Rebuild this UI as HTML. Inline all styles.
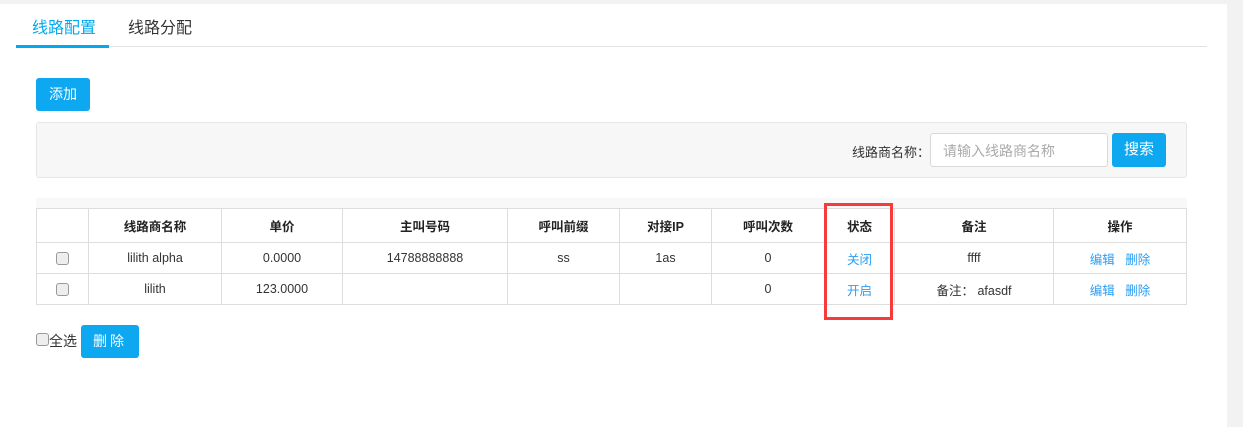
<!DOCTYPE html>
<html><head><meta charset="utf-8"><style>
*{box-sizing:border-box;margin:0;padding:0}
body{width:1243px;height:427px;background:#fff;font-family:"Liberation Sans","Noto Sans CJK SC",sans-serif;font-size:13px;color:#333;position:relative;overflow:hidden}
.topbar{position:absolute;left:0;top:0;width:1243px;height:4px;background:#f2f2f2}
.rightbar{position:absolute;left:1227px;top:0;width:16px;height:427px;background:#f2f2f2}
.tab{position:absolute;top:14px;font-size:16px}
.line{position:absolute;left:16px;top:46px;width:1191px;height:1px;background:#e2e2e2}
.uline{position:absolute;left:16px;top:45px;width:93px;height:3px;background:#00a9f0}
.btn{position:absolute;background:#0ea8f0;color:#fff;border-radius:3px;text-align:center;font-size:14px}
.sbox{position:absolute;left:36px;top:122px;width:1151px;height:56px;background:#f7f7f7;border:1px solid #e6e6e6;border-radius:3px}
.inp{position:absolute;left:930px;top:133px;width:178px;height:34px;border:1px solid #d8d8d8;border-radius:3px;background:#fff;color:#aaa;padding:7px 12px;font-size:14px}
.strip{position:absolute;left:36px;top:198px;width:1151px;height:10px;background:#f8f8f8}
table{position:absolute;left:36px;top:208px;border-collapse:collapse;width:1151px}
td,th{border:1px solid #ddd;text-align:center;font-size:12.5px;height:31px}
th{height:34px;font-weight:bold;color:#222}
.cb{display:inline-block;width:13px;height:13px;border:1px solid #999;border-radius:3px;background:#eee;vertical-align:middle}
.bl{color:#2a9df4}
.red{position:absolute;left:824px;top:203px;width:69px;height:117px;border:3px solid #f53b3b}
</style></head><body>
<div class="topbar"></div><div class="rightbar"></div>
<div class="tab" style="left:32px;color:#00a9f0">线路配置</div>
<div class="tab" style="left:128px;color:#333">线路分配</div>
<div class="line"></div><div class="uline"></div>
<div class="btn" style="left:36px;top:78px;width:54px;height:33px;line-height:33px">添加</div>
<div class="sbox"></div>
<div style="position:absolute;left:852px;top:142px;font-size:13px">线路商名称：</div>
<div class="inp">请输入线路商名称</div>
<div class="btn" style="left:1112px;top:133px;width:54px;height:34px;line-height:34px;font-size:15px">搜索</div>
<div class="strip"></div>
<table>
<tr><th style="width:52px"></th><th style="width:133px">线路商名称</th><th style="width:121px">单价</th><th style="width:165px">主叫号码</th><th style="width:112px">呼叫前缀</th><th style="width:92px">对接IP</th><th style="width:113px">呼叫次数</th><th style="width:70px">状态</th><th style="width:159px">备注</th><th>操作</th></tr>
<tr><td><span class="cb"></span></td><td>lilith alpha</td><td>0.0000</td><td>14788888888</td><td>ss</td><td>1as</td><td>0</td><td class="bl">关闭</td><td>ffff</td><td class="bl">编辑&nbsp;&nbsp;&nbsp;删除</td></tr>
<tr><td><span class="cb"></span></td><td>lilith</td><td>123.0000</td><td></td><td></td><td></td><td>0</td><td class="bl">开启</td><td>备注： afasdf</td><td class="bl">编辑&nbsp;&nbsp;&nbsp;删除</td></tr>
</table>
<div class="red"></div>
<span class="cb" style="position:absolute;left:36px;top:333px"></span>
<div style="position:absolute;left:49px;top:331px;font-size:14px">全选</div>
<div class="btn" style="left:81px;top:325px;width:58px;height:33px;line-height:33px;letter-spacing:3px">删除</div>
</body></html>
